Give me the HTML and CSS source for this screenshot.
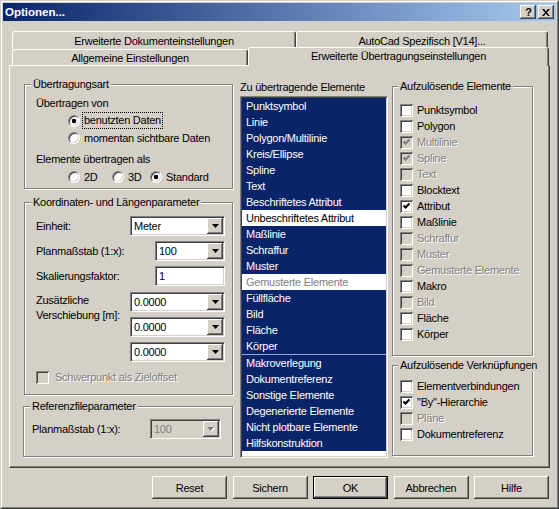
FILE: index.html
```html
<!DOCTYPE html>
<html lang="de">
<head>
<meta charset="utf-8">
<title>Optionen...</title>
<link rel="stylesheet" href="styles.css">
</head>
<body>
<div class="window">
 <div class="frame">
  <div class="titlebar">
   <span class="title">Optionen...</span>
   <div class="tbtns">
    <span class="tbtn help">?</span>
    <span class="tbtn"><svg width="8" height="7" viewBox="0 0 8 7"><path d="M0 0h2l2 2.5 2-2.5h2L5 3.5 8 7H6L4 4.5 2 7H0l3-3.5z" fill="#000"/></svg></span>
   </div>
  </div>
  <div class="client">
   <div class="tabrow back">
    <div class="tab t1">Erweiterte Dokumenteinstellungen</div>
    <div class="tab t2">AutoCad Spezifisch [V14]...</div>
   </div>
   <div class="tabrow front">
    <div class="tab t3">Allgemeine Einstellungen</div>
    <div class="tab sel">Erweiterte Übertragungseinstellungen</div>
   </div>
   <div class="panel">
    <div class="col left">
     <div class="group g1">
      <div class="gtitle">Übertragungsart</div>
      <div class="lbl first">Übertragen von</div>
      <div class="rrow r1"><span class="radio on"></span><span class="focus">benutzten Daten</span></div>
      <div class="rrow"><span class="radio"></span><span>momentan sichtbare Daten</span></div>
      <div class="lbl second">Elemente übertragen als</div>
      <div class="rrow r3">
       <span class="ritem w44"><span class="radio"></span><span>2D</span></span>
       <span class="ritem w38"><span class="radio"></span><span>3D</span></span>
       <span class="ritem"><span class="radio on"></span><span>Standard</span></span>
      </div>
     </div>
     <div class="group g2">
      <div class="gtitle">Koordinaten- und Längenparameter</div>
      <div class="frow f1"><span class="flbl">Einheit:</span><div class="combo w95"><span class="cval">Meter</span><span class="cbtn"><svg width="7" height="4" viewBox="0 0 7 4"><path d="M0 0h7L3.5 4z" fill="#000"/></svg></span></div></div>
      <div class="frow"><span class="flbl">Planmaßstab (1:x):</span><div class="combo w70"><span class="cval">100</span><span class="cbtn"><svg width="7" height="4" viewBox="0 0 7 4"><path d="M0 0h7L3.5 4z" fill="#000"/></svg></span></div></div>
      <div class="frow"><span class="flbl">Skalierungsfaktor:</span><div class="edit w70">1</div></div>
      <div class="frow multi">
       <div class="flbl stack"><span>Zusätzliche</span><span>Verschiebung [m]:</span></div>
       <div class="combos">
        <div class="combo w95"><span class="cval">0.0000</span><span class="cbtn"><svg width="7" height="4" viewBox="0 0 7 4"><path d="M0 0h7L3.5 4z" fill="#000"/></svg></span></div>
        <div class="combo w95"><span class="cval">0.0000</span><span class="cbtn"><svg width="7" height="4" viewBox="0 0 7 4"><path d="M0 0h7L3.5 4z" fill="#000"/></svg></span></div>
        <div class="combo w95"><span class="cval">0.0000</span><span class="cbtn"><svg width="7" height="4" viewBox="0 0 7 4"><path d="M0 0h7L3.5 4z" fill="#000"/></svg></span></div>
       </div>
      </div>
      <div class="crow schw"><span class="chk dis"></span><span class="dtext">Schwerpunkt als Zieloffset</span></div>
     </div>
     <div class="group g3">
      <div class="gtitle">Referenzfileparameter</div>
      <div class="frow f3"><span class="flbl">Planmaßstab (1:x):</span><div class="combo w71 disabled"><span class="cval">100</span><span class="cbtn"><svg width="8" height="5" viewBox="0 0 8 5"><path d="M1 1h7L4.5 5z" fill="#fff"/><path d="M0 0h7L3.5 4z" fill="#808080"/></svg></span></div></div>
     </div>
    </div>
    <div class="col mid">
     <div class="mlbl">Zu übertragende Elemente</div>
     <div class="listbox">
      <div class="li">Punktsymbol</div>
      <div class="li">Linie</div>
      <div class="li">Polygon/Multilinie</div>
      <div class="li">Kreis/Ellipse</div>
      <div class="li">Spline</div>
      <div class="li">Text</div>
      <div class="li">Beschriftetes Attribut</div>
      <div class="li wsel">Unbeschriftetes Attribut</div>
      <div class="li">Maßlinie</div>
      <div class="li">Schraffur</div>
      <div class="li">Muster</div>
      <div class="li wdis">Gemusterte Elemente</div>
      <div class="li">Füllfläche</div>
      <div class="li">Bild</div>
      <div class="li">Fläche</div>
      <div class="li">Körper</div>
      <div class="li sep">Makroverlegung</div>
      <div class="li">Dokumentreferenz</div>
      <div class="li">Sonstige Elemente</div>
      <div class="li">Degenerierte Elemente</div>
      <div class="li">Nicht plotbare Elemente</div>
      <div class="li">Hilfskonstruktion</div>
     </div>
    </div>
    <div class="col right">
     <div class="group rg1">
      <div class="gtitle rt">Aufzulösende Elemente</div>
      <div class="clist c1">
       <div class="crow"><span class="chk"></span><span>Punktsymbol</span></div>
       <div class="crow"><span class="chk"></span><span>Polygon</span></div>
       <div class="crow"><span class="chk dis"><svg width="13" height="13" viewBox="0 0 13 13"><polyline points="3.5,5.5 5.5,7.5 9.5,3.5" fill="none" stroke="#808080" stroke-width="2.2"/></svg></span><span class="dtext">Multilinie</span></div>
       <div class="crow"><span class="chk dis"><svg width="13" height="13" viewBox="0 0 13 13"><polyline points="3.5,5.5 5.5,7.5 9.5,3.5" fill="none" stroke="#808080" stroke-width="2.2"/></svg></span><span class="dtext">Spline</span></div>
       <div class="crow"><span class="chk dis"></span><span class="dtext">Text</span></div>
       <div class="crow"><span class="chk"></span><span>Blocktext</span></div>
       <div class="crow"><span class="chk"><svg width="13" height="13" viewBox="0 0 13 13"><polyline points="3.5,5.5 5.5,7.5 9.5,3.5" fill="none" stroke="#000" stroke-width="2.2"/></svg></span><span>Attribut</span></div>
       <div class="crow"><span class="chk"></span><span>Maßlinie</span></div>
       <div class="crow"><span class="chk dis"></span><span class="dtext">Schraffur</span></div>
       <div class="crow"><span class="chk dis"></span><span class="dtext">Muster</span></div>
       <div class="crow"><span class="chk dis"></span><span class="dtext">Gemusterte Elemente</span></div>
       <div class="crow"><span class="chk"></span><span>Makro</span></div>
       <div class="crow"><span class="chk dis"></span><span class="dtext">Bild</span></div>
       <div class="crow"><span class="chk"></span><span>Fläche</span></div>
       <div class="crow"><span class="chk"></span><span>Körper</span></div>
      </div>
     </div>
     <div class="group rg2">
      <div class="gtitle rt">Aufzulösende Verknüpfungen</div>
      <div class="clist c2">
       <div class="crow"><span class="chk"></span><span>Elementverbindungen</span></div>
       <div class="crow"><span class="chk"><svg width="13" height="13" viewBox="0 0 13 13"><polyline points="3.5,5.5 5.5,7.5 9.5,3.5" fill="none" stroke="#000" stroke-width="2.2"/></svg></span><span>"By"-Hierarchie</span></div>
       <div class="crow"><span class="chk dis"></span><span class="dtext">Pläne</span></div>
       <div class="crow"><span class="chk"></span><span>Dokumentreferenz</span></div>
      </div>
     </div>
    </div>
   </div>
   <div class="buttons">
    <span class="btn">Reset</span>
    <span class="btn">Sichern</span>
    <span class="btn default">OK</span>
    <span class="btn">Abbrechen</span>
    <span class="btn">Hilfe</span>
   </div>
  </div>
 </div>
</div>
</body>
</html>
```
FILE: styles.css
```css
html, body {
  margin: 0;
  padding: 0;
  background: #D4D0C8;
}
body {
  font-family: "Liberation Sans", Arial, sans-serif;
  font-size: 11px;
  letter-spacing: -0.25px;
  color: #000;
}
.window {
  width: 559px;
  height: 509px;
  box-sizing: border-box;
  border: 1px solid;
  border-color: #D4D0C8 #404040 #404040 #D4D0C8;
  background: #D4D0C8;
  overflow: hidden;
}
.frame {
  height: 100%;
  box-sizing: border-box;
  border: 1px solid;
  border-color: #fff #808080 #808080 #fff;
  padding: 1px;
}
.titlebar {
  height: 18px;
  display: flex;
  align-items: center;
  justify-content: space-between;
  background: linear-gradient(to right, #0A246A, #A6CAF0);
}
.title {
  color: #fff;
  font-weight: bold;
  font-size: 11.5px;
  letter-spacing: 0;
  line-height: 18px;
  padding-left: 2px;
}
.tbtns {
  display: flex;
  gap: 2px;
  padding-right: 2px;
}
.tbtn {
  width: 16px;
  height: 14px;
  box-sizing: border-box;
  background: #D4D0C8;
  box-shadow: inset -1px -1px 0 #404040, inset 1px 1px 0 #fff, inset -2px -2px 0 #808080, inset 2px 2px 0 #D4D0C8;
  display: flex;
  align-items: center;
  justify-content: center;
}
.tbtn.help {
  font-weight: bold;
  font-size: 11px;
  line-height: 14px;
  padding-left: 1px;
}
.client {
  height: 485px;
}
.tabrow {
  display: flex;
  margin-left: 9px;
}
.tabrow.back {
  margin-top: 10px;
  height: 18px;
}
.tabrow.front {
  height: 16px;
}
.tab {
  box-sizing: border-box;
  border-top: 1px solid #fff;
  border-left: 1px solid #fff;
  border-right: 1px solid #404040;
  box-shadow: inset -1px 0 0 #808080;
  border-radius: 3px 3px 0 0;
  text-align: center;
  background: #D4D0C8;
  white-space: nowrap;
}
.back .tab {
  height: 18px;
  line-height: 17px;
  padding-top: 1px;
}
.t1 { width: 284px; }
.t2 { width: 252px; }
.front .tab {
  height: 16px;
  line-height: 15px;
  padding-top: 1px;
}
.t3 { width: 236px; }
.front .tab.sel {
  width: 301px;
  height: 19px;
  margin-top: -2px;
  position: relative;
  z-index: 2;
}
.panel {
  box-sizing: border-box;
  width: 541px;
  height: 403px;
  margin-left: 6px;
  border-top: 1px solid #fff;
  border-left: 1px solid #fff;
  border-right: 1px solid #404040;
  border-bottom: 1px solid #404040;
  box-shadow: inset -1px -1px 0 #808080;
  display: flex;
  padding-left: 14px;
}
.col {
  display: flex;
  flex-direction: column;
}
.col.left {
  width: 210px;
  padding-top: 18px;
}
.group {
  box-sizing: border-box;
  border: 1px solid #808080;
  box-shadow: inset 1px 1px 0 #fff, 1px 1px 0 #fff;
  display: flex;
  flex-direction: column;
}
.gtitle {
  margin: -7px 0 0 6px;
  padding: 0 2px;
  line-height: 13px;
  background: #D4D0C8;
  align-self: flex-start;
  white-space: nowrap;
}
.gtitle.rt { margin-left: 5px; }
.g1 { width: 209px; height: 105px; }
.g2 { width: 209px; height: 193px; margin-top: 13px; }
.g3 { width: 210px; height: 51px; margin-top: 11px; margin-left: -1px; }
.lbl {
  line-height: 16px;
  padding-left: 11px;
}
.lbl.first { margin-top: 4px; }
.lbl.second { margin-top: 5px; }
.rrow {
  height: 17px;
  display: flex;
  align-items: center;
  gap: 4px;
  padding-left: 43px;
}
.rrow.r1 { margin-top: 1px; }
.rrow.r3 { margin-top: 1px; gap: 0; }
.ritem {
  display: flex;
  align-items: center;
  gap: 4px;
}
.w44 { width: 44px; }
.w38 { width: 38px; }
.radio {
  width: 12px;
  height: 12px;
  box-sizing: border-box;
  border-radius: 50%;
  border: 1px solid;
  border-color: #808080 #fff #fff #808080;
  background: #fff;
  box-shadow: inset 1px 1px 0 #404040, inset -1px -1px 0 #D4D0C8;
  flex: none;
}
.radio.on {
  background: radial-gradient(circle at 50% 50%, #000 0, #000 2px, #fff 2.6px);
}
.focus {
  outline: 1px dotted #000;
  line-height: 15px;
  padding: 0 1px;
  margin-left: -1px;
}
.frow {
  display: flex;
  align-items: center;
  height: 20px;
  margin-top: 5px;
  padding-right: 7px;
}
.frow.f1 { margin-top: 7px; }
.flbl {
  flex: 1;
  padding-left: 11px;
  white-space: nowrap;
}
.frow.multi {
  height: auto;
  align-items: flex-start;
  margin-top: 6px;
}
.flbl.stack {
  display: flex;
  flex-direction: column;
  line-height: 15px;
  margin-top: 1px;
}
.combos {
  display: flex;
  flex-direction: column;
  gap: 5px;
}
.combo, .edit {
  box-sizing: border-box;
  height: 20px;
  border: 1px solid;
  border-color: #808080 #fff #fff #808080;
  box-shadow: inset 1px 1px 0 #404040, inset -1px -1px 0 #D4D0C8;
  background: #fff;
  padding: 1px;
  display: flex;
  align-items: center;
}
.w95 { width: 95px; }
.w70 { width: 70px; }
.w71 { width: 71px; }
.cval {
  flex: 1;
  padding-left: 2px;
  line-height: 16px;
}
.edit {
  padding-left: 3px;
  line-height: 16px;
}
.cbtn {
  width: 16px;
  height: 16px;
  box-sizing: border-box;
  background: #D4D0C8;
  box-shadow: inset -1px -1px 0 #404040, inset 1px 1px 0 #fff, inset -2px -2px 0 #808080;
  display: flex;
  align-items: center;
  justify-content: center;
}
.combo.disabled {
  background: #D4D0C8;
}
.combo.disabled .cval {
  color: #808080;
}
.frow.f3 {
  margin-top: 6px;
  padding-right: 11px;
}
.f3 .flbl { padding-left: 8px; }
.crow {
  height: 16px;
  display: flex;
  align-items: center;
  gap: 4px;
  white-space: nowrap;
}
.crow.schw {
  margin-top: 7px;
  padding-left: 11px;
  gap: 6px;
}
.chk {
  width: 13px;
  height: 13px;
  flex: none;
  background: #fff;
  box-shadow: inset 1px 1px 0 #808080, inset -1px -1px 0 #fff, inset 2px 2px 0 #404040, inset -2px -2px 0 #D4D0C8;
  display: flex;
}
.chk.dis {
  background: #D4D0C8;
}
.dtext {
  color: #808080;
  text-shadow: 1px 1px 0 #fff;
}
.col.mid {
  width: 148px;
  margin-left: 6px;
  padding-top: 13px;
}
.mlbl {
  line-height: 16px;
  white-space: nowrap;
}
.listbox {
  box-sizing: border-box;
  margin-top: 1px;
  height: 362px;
  border: 1px solid;
  border-color: #808080 #fff #fff #808080;
  box-shadow: inset 1px 1px 0 #404040, inset -1px -1px 0 #D4D0C8;
  padding: 1px;
  background: #fff;
}
.li {
  height: 16px;
  line-height: 16px;
  padding-left: 4px;
  background: #0A246A;
  color: #fff;
  white-space: nowrap;
}
.li.wsel {
  background: #fff;
  color: #000;
}
.li.wdis {
  background: #fff;
  color: #808080;
}
.li.sep {
  border-top: 1px solid #9AA4D4;
}
.col.right {
  width: 141px;
  margin-left: 4px;
  padding-top: 20px;
}
.rg1 { height: 270px; }
.rg2 { height: 91px; margin-top: 9px; }
.clist {
  display: flex;
  flex-direction: column;
  padding-left: 7px;
}
.clist.c1 { margin-top: 9px; }
.clist.c2 { margin-top: 6px; }
.buttons {
  display: flex;
  justify-content: flex-end;
  gap: 5.5px;
  margin-top: 8px;
  padding-right: 7px;
}
.btn {
  width: 75px;
  height: 23px;
  box-sizing: border-box;
  display: flex;
  align-items: center;
  justify-content: center;
  background: #D4D0C8;
  box-shadow: inset -1px -1px 0 #404040, inset 1px 1px 0 #fff, inset -2px -2px 0 #808080, inset 2px 2px 0 #D4D0C8;
}
.btn.default {
  border: 1px solid #000;
}
```
